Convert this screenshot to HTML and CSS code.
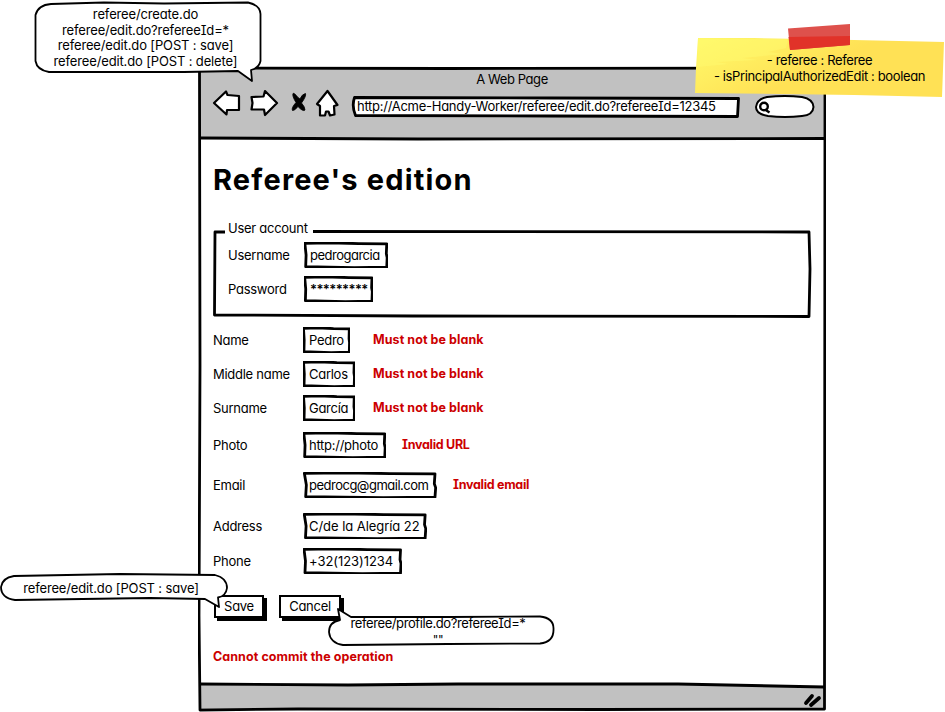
FILE: index.html
```html
<!DOCTYPE html>
<html lang="en">
<head>
<meta charset="utf-8">
<title>A Web Page</title>
<link rel="stylesheet" href="styles.css">
</head>
<body>
<svg class="defs" width="0" height="0" aria-hidden="true">
  <defs>
    <symbol id="box" viewBox="0 0 100 100" preserveAspectRatio="none">
      <path class="ink" d="M1 5 L30 3 L65 6 L98.500 7 L98 45 L99 60 L98.500 97 L60 99 L30 97 L2 95 L2.500 50 Z" vector-effect="non-scaling-stroke"/>
    </symbol>
  </defs>
</svg>
<main class="window">
  <svg class="frame" viewBox="0 0 628 646" aria-hidden="true">
    <path class="chrome" d="M2 2H627V73L400 73L2 71Z"/>
    <path class="chrome" d="M2 617L240 619L500 618L627 621V642H2Z"/>
    <path class="line" d="M1.500 2L250 2.500L627 2L626.500 643L400 643.500L100 643L2 644L1 550L2 300Z"/>
    <path class="line" d="M2 72L220 73L626 72.500"/>
    <path class="line" d="M2 618L150 619L260 618L480 618L626 621"/>
    <path class="grip" d="M608 637L614 630M613 639L621 632"/>
  </svg>
  <header class="bar">
    <div class="title">A Web Page</div>
    <div class="nav">
      <svg class="icons" width="130" height="32" viewBox="0 0 130 32" aria-hidden="true">
        <path class="icon" d="M2 16L14 4.500L15.500 8L27 9V23L15 23L14.500 27.500Z"/>
        <path class="icon" d="M39.500 10L51.500 9.500L53 4L65 16L53 28L52 22.500L39.500 22.500L40.500 16Z"/>
        <path class="cross" d="M81 6.500Q82 5.500 86 10.500L88 12Q90 7 93.500 6.500Q94.500 9 89.500 16Q93 20 93 23Q91 25 86 19.500Q82.500 24 80.500 23.500Q79 21 84 15.500Q80 9 81 6.500Z"/>
        <path class="icon" d="M115.500 4L105 17L108 19L108 28.500L113 28.500L114 24.500H116.500L118 28.500L122.500 27.500L122 19L125.500 18Z"/>
      </svg>
      <div class="url">
        <svg class="sketch" viewBox="0 0 388 22"><path class="ink" d="M3 1.500L200 2L387 2.500L386 20.500L200 20L4 19.500Q0 10 3 1.500Z"/></svg>
        <span>http://Acme-Handy-Worker/referee/edit.do?refereeId=12345</span>
      </div>
      <svg class="search" width="60" height="24" viewBox="0 0 60 24" aria-hidden="true">
        <path class="pill" d="M12 2Q30 0 47 2Q58 4 58.500 12Q58 20 47 21Q30 23 13 21Q1 19 1 12Q2 4 12 2Z"/>
        <circle class="lens" cx="9" cy="11.500" r="3.800"/><path class="lens" d="M10 14.500L14.500 17.500"/>
      </svg>
    </div>
  </header>
  <section class="page">
    <h1>Referee's edition</h1>
    <div class="group">
      <svg class="sketch" viewBox="0 0 598 88"><path class="ink open" d="M12 3H2L1.500 86L200 87L596 87.500L597 40L596 3L100 2.500"/></svg>
      <div class="legend">User account</div>
      <div class="row"><span class="label">Username</span><span class="input user tight"><svg class="sketch"><use href="#box"/></svg>pedrogarcia</span></div>
      <div class="row"><span class="label">Password</span><span class="input pass"><svg class="sketch"><use href="#box"/></svg>*********</span></div>
    </div>
    <div class="row name"><span class="label">Name</span><span class="input w47"><svg class="sketch"><use href="#box"/></svg>Pedro</span><span class="error far">Must not be blank</span></div>
    <div class="row"><span class="label">Middle name</span><span class="input w52"><svg class="sketch"><use href="#box"/></svg>Carlos</span><span class="error">Must not be blank</span></div>
    <div class="row"><span class="label">Surname</span><span class="input w52"><svg class="sketch"><use href="#box"/></svg>García</span><span class="error">Must not be blank</span></div>
    <div class="row photo"><span class="label">Photo</span><span class="input w83"><svg class="sketch"><use href="#box"/></svg>http://photo</span><span class="error near">Invalid URL</span></div>
    <div class="row email"><span class="label">Email</span><span class="input w134 tight"><svg class="sketch"><use href="#box"/></svg>pedrocg@gmail.com</span><span class="error near">Invalid email</span></div>
    <div class="row address"><span class="label">Address</span><span class="input w124 loose"><svg class="sketch"><use href="#box"/></svg>C/de la Alegría 22</span></div>
    <div class="row phone"><span class="label">Phone</span><span class="input w99 loose"><svg class="sketch"><use href="#box"/></svg>+32(123)1234</span></div>
    <div class="actions"><span class="button save">Save</span><span class="button cancel">Cancel</span></div>
    <div class="error commit">Cannot commit the operation</div>
  </section>
</main>

<aside class="callout routes">
  <svg class="sketch" viewBox="0 0 230 84"><path class="bubble" d="M17 2L70 .5L130 1.500L214 .5Q226 3 226.500 12V59Q225 66 217 68L218 79L204 69L150 70L15 70Q3 68 1.500 59V13Q4 3 17 2Z"/></svg>
  <p>referee/create.do</p><p>referee/edit.do?refereeId=*</p><p>referee/edit.do [POST : save]</p><p>referee/edit.do [POST : delete]</p>
</aside>
<aside class="callout save-route">
  <svg class="sketch" viewBox="0 0 230 36"><path class="bubble" d="M14 3L120 1L215 2Q227 5 227 15Q226 23 218 24.500L219 34L205 26L150 25L15 27Q1 25 1 14Q2 5 14 3Z"/></svg>
  <p>referee/edit.do [POST : save]</p>
</aside>
<aside class="callout profile-route">
  <svg class="sketch" viewBox="0 0 228 38"><path class="bubble" d="M12 12L10 1L23 9L120 9L212 8.500Q226 10 225.500 21Q226 34 212 35.500L120 36L15 37Q2 35 1 24Q1 14 12 12Z"/></svg>
  <p>referee/profile.do?refereeId=*</p><p class="quotes">""</p>
</aside>
<aside class="note">
  <svg class="sketch" viewBox="0 0 251 76" aria-hidden="true">
    <defs>
      <linearGradient id="paper" x1="0" y1="0" x2="1" y2=".5">
        <stop offset="0" stop-color="#fff968"/><stop offset=".3" stop-color="#ffee60"/><stop offset=".6" stop-color="#ffe155"/>
      </linearGradient>
    </defs>
    <path class="paper" d="M4 15L60 15L160 17L250 19L248 74L160 72L1 70L2 45Z"/>
    <path class="sheen" d="M4 16L94 16L92 25L74 29L90 31L48 35L64 37L22 39L35 41L3 44Z"/>
    <path class="tape" d="M94 5.500L156 1V22L96 27Z"/>
    <path class="tape-shade" d="M94.500 14L156 13V22L96 27Z"/>
  </svg>
  <p>- referee : Referee</p><p>- isPrincipalAuthorizedEdit : boolean</p>
</aside>
</body>
</html>
```

FILE: styles.css
```css
* { box-sizing: border-box; }

body {
  margin: 0;
  width: 945px;
  height: 712px;
  position: relative;
  overflow: hidden;
  background: #fff;
  color: #000;
  font: 13px/16px Inter, "Open Sans", sans-serif;
  font-feature-settings: "cv11", "cv08", "calt" 0;
  letter-spacing: -.27px;
}

p, h1 { margin: 0; }
svg { display: block; }
.defs { position: absolute; }

.window {
  position: relative;
  width: 628px;
  height: 646px;
  margin: 66px 0 0 198px;
}

.frame { position: absolute; inset: 0; width: 100%; height: 100%; }
.chrome { fill: #c1c1c1; }
.line { fill: none; stroke: #000; stroke-width: 2.8; stroke-linejoin: round; }
.grip { stroke: #000; stroke-width: 3.8; stroke-linecap: round; }

.sketch {
  position: absolute;
  inset: 0;
  width: 100%;
  height: 100%;
  z-index: -1;
  overflow: visible;
}
.ink { fill: #fff; stroke: #000; stroke-width: 2.8; stroke-linejoin: round; }
.open { fill: none; }
.bubble { fill: #fff; stroke: #000; stroke-width: 1.8; stroke-linejoin: round; }

.bar { position: relative; height: 73px; padding-top: 5px; }
.title { text-align: center; letter-spacing: -.4px; }
.nav { display: flex; align-items: flex-start; padding-left: 14px; }
.icons { flex: none; }
.icon { fill: #fff; stroke: #000; stroke-width: 2.2; stroke-linejoin: round; }
.cross { stroke: #000; stroke-width: .8; stroke-linejoin: round; }
.url {
  position: relative;
  z-index: 0;
  width: 389px;
  height: 22px;
  margin: 9px 15px 0 9px;
  padding: 2px 0 0 6px;
  white-space: nowrap;
}
.search { margin-top: 8px; }
.pill { fill: #fff; stroke: #000; stroke-width: 2; }
.lens { fill: none; stroke: #000; stroke-width: 2.4; }

.page { position: relative; padding: 20px 15px 0; }
h1 { font-size: 29px; line-height: 42px; font-weight: 700; letter-spacing: 1.180px; }

.group {
  position: relative;
  z-index: 0;
  display: flex;
  flex-direction: column;
  width: 598px;
  height: 88px;
  margin-top: 28px;
  padding-left: 15px;
}
.legend { flex: none; height: 21px; margin-top: -9px; }
.row { display: flex; flex: none; align-items: center; height: 28px; margin-bottom: 6px; white-space: nowrap; }
.label { width: 90px; }
.group .label { width: 76px; }
.input {
  position: relative;
  z-index: 0;
  height: 26px;
  padding: 5px 0 0 6px;
}
.tight { letter-spacing: -.5px; }
.loose { letter-spacing: -.05px; }
.user { width: 84px; }
.pass { width: 69px; letter-spacing: -.6px; font-weight: 600; }
.w47 { width: 47px; }
.w52 { width: 52px; }
.w83 { width: 83px; }
.w134 { width: 134px; }
.w124 { width: 124px; }
.w99 { width: 99px; }
.name { margin-top: 9px; }
.photo { margin-top: 9px; }
.email { margin-top: 12px; }
.address { margin-top: 13px; }
.phone { margin-top: 7px; }

.error { color: #cc0000; font-size: 12.500px; font-weight: 700; letter-spacing: .07px; margin-left: 18px; }
.far { margin-left: 23px; }
.near { margin-left: 16px; letter-spacing: -.28px; }
.commit { margin: 31px 0 0; }

.actions { display: flex; gap: 15px; margin-top: 20px; padding-left: 1px; }
.button {
  height: 23px;
  border: 2px solid #000;
  background: #fff;
  text-align: center;
  line-height: 19px;
  box-shadow: 3px 3px 0 #000;
}
.save { width: 50px; }
.cancel { width: 62px; }

.callout { position: absolute; z-index: 1; text-align: center; white-space: nowrap; letter-spacing: -.14px; }
.routes { left: 34px; top: 2px; width: 230px; height: 84px; padding: 5px 7px 0 0; line-height: 15.700px; }
.save-route { left: 0; top: 573px; width: 230px; height: 36px; padding: 7px 8px 0 0; }
.profile-route { left: 328px; top: 608px; width: 228px; height: 38px; padding: 8px 8px 0 0; line-height: 15.500px; letter-spacing: -.4px; }
.quotes { font-size: 12px; }

.note {
  position: absolute;
  z-index: 1;
  left: 694px;
  top: 23px;
  width: 251px;
  height: 76px;
  padding: 29px 0 0;
  text-align: center;
  white-space: nowrap;
  letter-spacing: -.37px;
}
.paper { fill: url(#paper); }
.sheen { fill: #fffb70; opacity: .45; }
.tape { fill: #de514c; }
.tape-shade { fill: #e13229; }
```
